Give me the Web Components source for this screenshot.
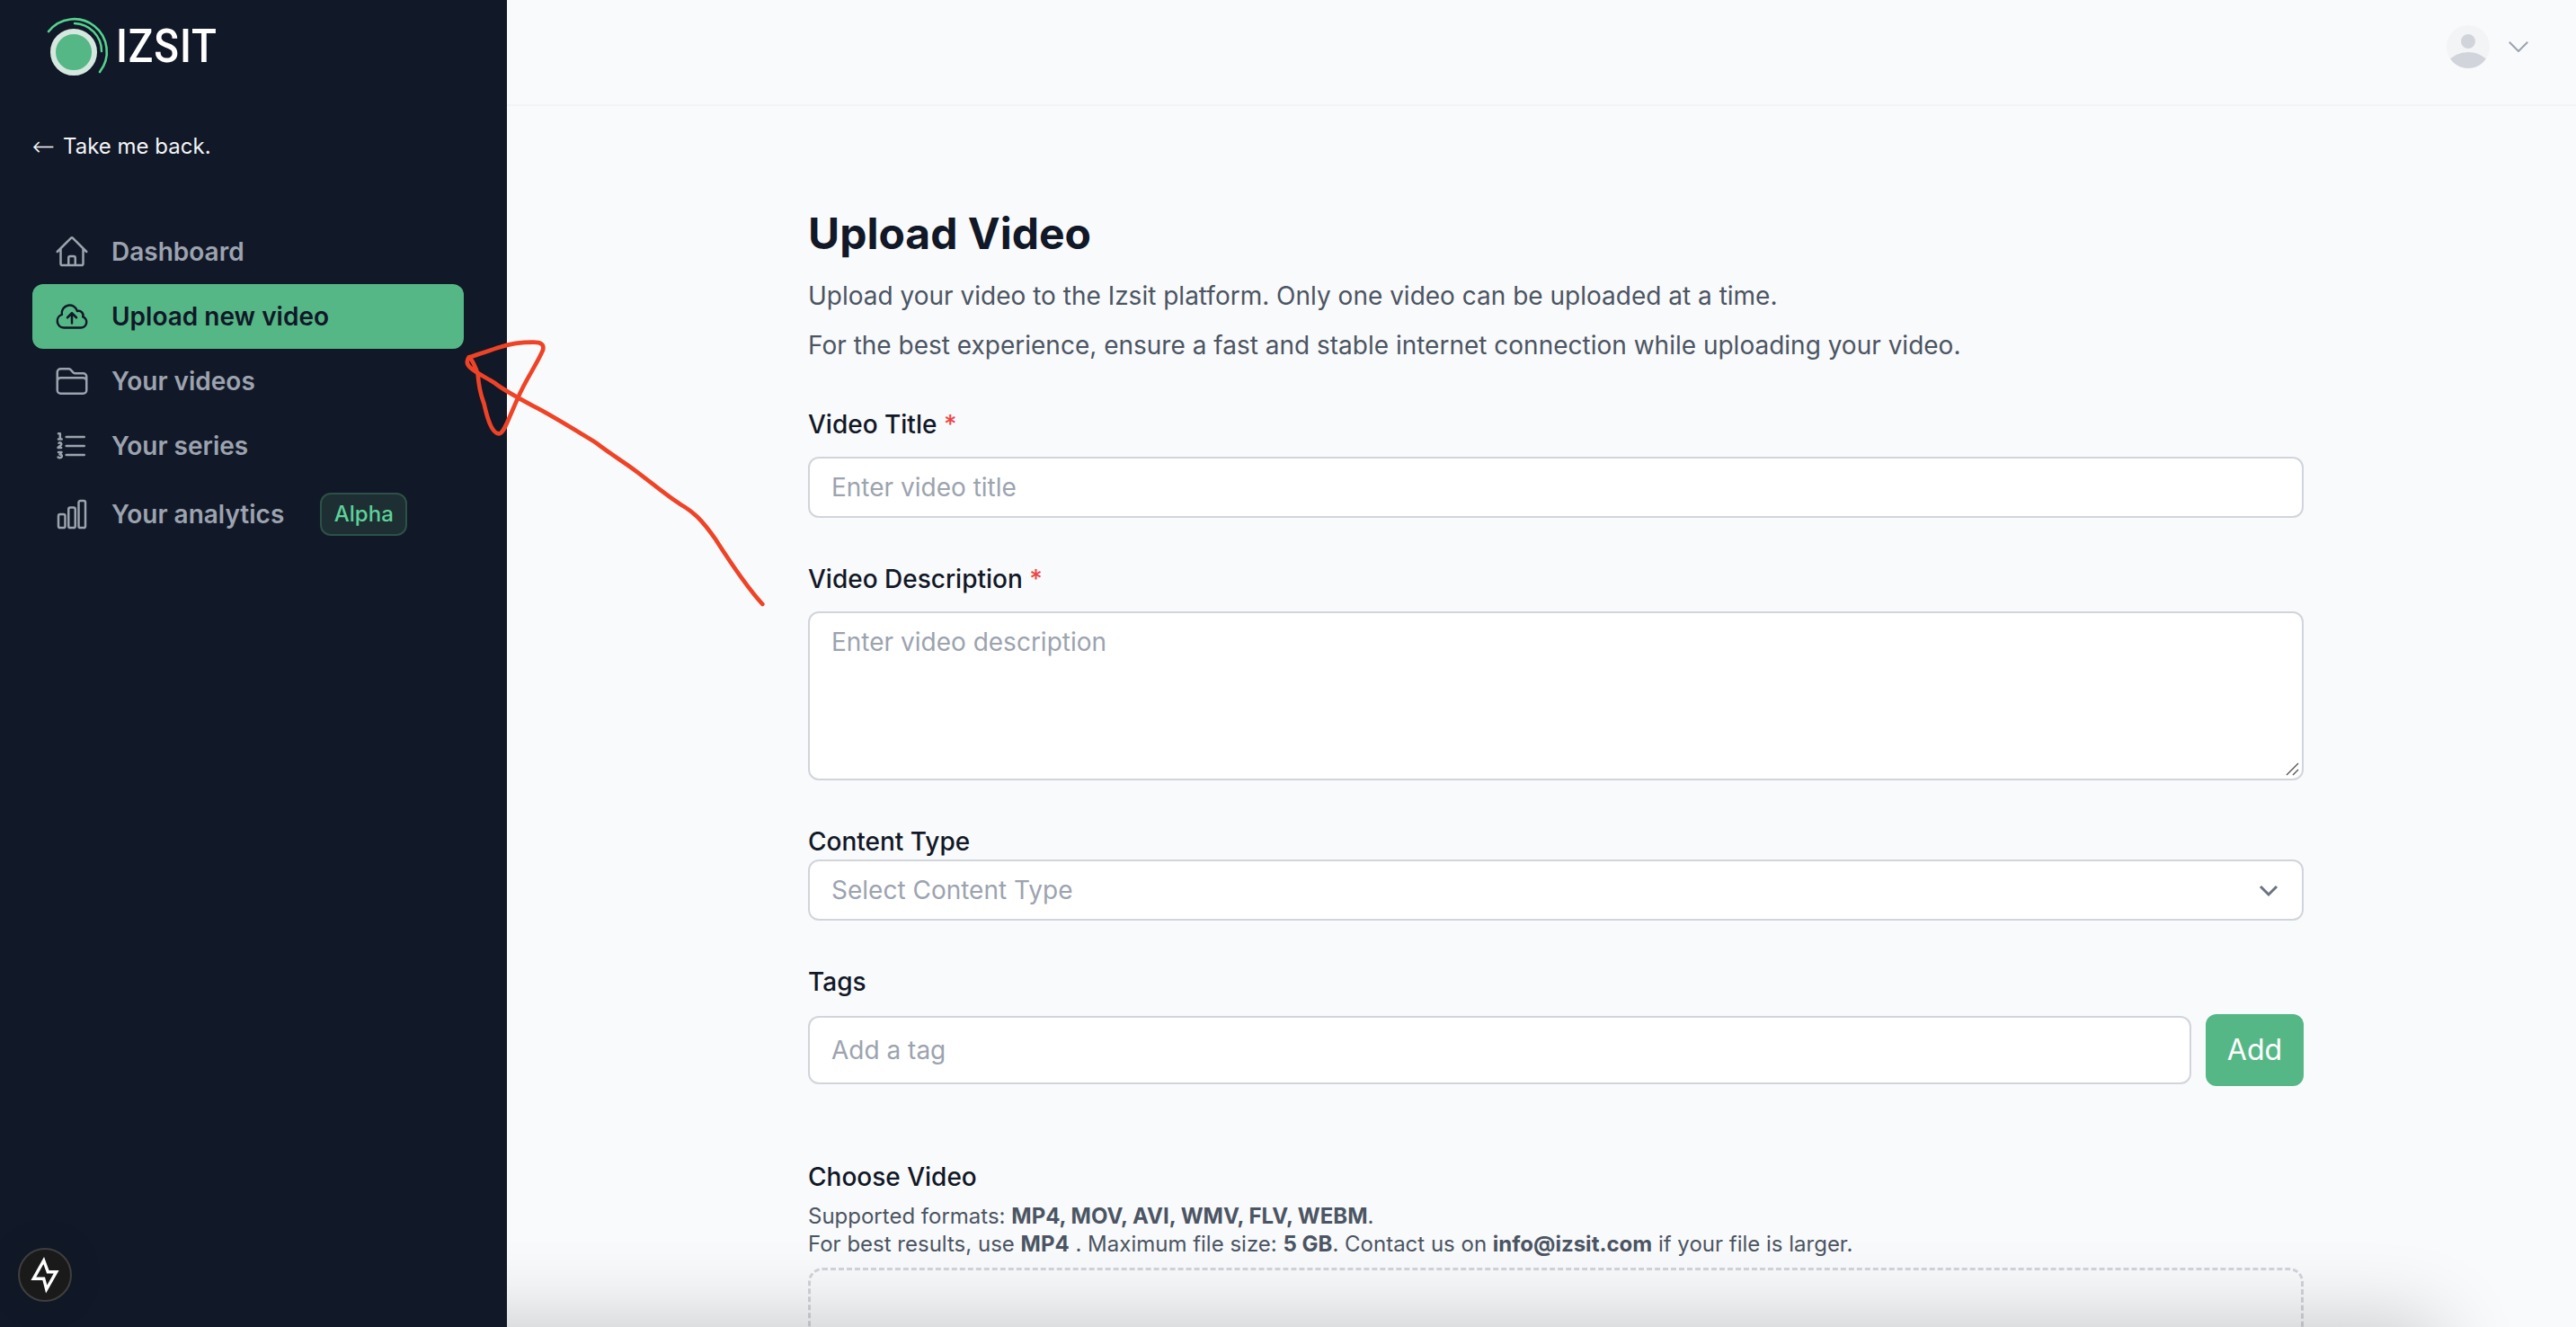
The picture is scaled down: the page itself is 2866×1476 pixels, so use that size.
<!DOCTYPE html>
<html lang="en">
<head>
<meta charset="utf-8">
<title>Upload Video</title>
<style>
html,body{margin:0;padding:0;height:1476px;overflow:hidden;background:#f9fafb;font-family:Inter,"Noto Sans",sans-serif}
</style>
</head>
<body>
<app-shell>
  <side-bar slot="side">
    <nav-item icon="home" label="Dashboard"></nav-item>
    <nav-item icon="cloud" label="Upload new video" active></nav-item>
    <nav-item icon="folder" label="Your videos"></nav-item>
    <nav-item icon="list" label="Your series"></nav-item>
    <nav-item icon="chart" label="Your analytics" badge="Alpha" tall></nav-item>
  </side-bar>
  <top-bar slot="top"></top-bar>
  <upload-form slot="main"></upload-form>
  <dev-button slot="over"></dev-button>
  <scribble-arrow slot="over"></scribble-arrow>
</app-shell>
<script>
const ICONS={
home:'<path d="m2.25 12 8.954-8.955c.44-.439 1.152-.439 1.591 0L21.75 12M4.5 9.75v10.125c0 .621.504 1.125 1.125 1.125H9.75v-4.875c0-.621.504-1.125 1.125-1.125h2.25c.621 0 1.125.504 1.125 1.125V21h4.125c.621 0 1.125-.504 1.125-1.125V9.75M8.25 21h8.25"/>',
cloud:'<path d="M12 16.5V9.75m0 0 3 3m-3-3-3 3M6.75 19.5a4.5 4.5 0 0 1-1.41-8.775 5.25 5.25 0 0 1 10.233-2.33 3 3 0 0 1 3.758 3.848A3.752 3.752 0 0 1 18 19.5H6.75Z"/>',
folder:'<path d="M2.25 12.75V12A2.25 2.25 0 0 1 4.5 9.75h15A2.25 2.25 0 0 1 21.75 12v.75m-8.69-6.44-2.12-2.12a1.5 1.5 0 0 0-1.061-.44H4.5A2.25 2.25 0 0 0 2.25 6v12a2.25 2.25 0 0 0 2.25 2.25h15A2.25 2.25 0 0 0 21.75 18V9a2.25 2.25 0 0 0-2.25-2.25h-5.379a1.5 1.5 0 0 1-1.06-.44Z"/>',
list:'<path d="M8.242 5.992h12m-12 6.003H20.24m-12 5.999h12M4.117 7.495v-3.75H2.99m1.125 3.75H2.99m1.125 0H5.24m-1.92 2.577a.976.976 0 1 1 1.339 1.42l-1.919 1.6v.125h2.137M3 16.2h2.1l-1.2 1.5c.9-.1 1.4.4 1.4 1 0 .7-.6 1.2-1.3 1.2-.5 0-.9-.1-1.2-.4"/>',
chart:'<path d="M3 13.125C3 12.504 3.504 12 4.125 12h2.25c.621 0 1.125.504 1.125 1.125v6.75C7.5 20.496 6.996 21 6.375 21h-2.25A1.125 1.125 0 0 1 3 19.875v-6.75ZM9.75 8.625c0-.621.504-1.125 1.125-1.125h2.25c.621 0 1.125.504 1.125 1.125v11.25c0 .621-.504 1.125-1.125 1.125h-2.25a1.125 1.125 0 0 1-1.125-1.125V8.625ZM16.5 4.125c0-.621.504-1.125 1.125-1.125h2.25C20.496 3 21 3.504 21 4.125v15.75c0 .621-.504 1.125-1.125 1.125h-2.25a1.125 1.125 0 0 1-1.125-1.125V4.125Z"/>'
};
function def(name,html,extra){
  const t=document.createElement('template');t.innerHTML=html;
  customElements.define(name,class extends HTMLElement{
    constructor(){super();this.attachShadow({mode:'open'}).appendChild(t.content.cloneNode(true));}
    connectedCallback(){extra&&extra.call(this,this.shadowRoot);}
  });
}
def('app-shell',`<style>
:host{display:grid;grid-template-columns:564px 1fr;grid-template-rows:118px 1fr;width:2866px;height:1476px;position:relative;overflow:hidden}
::slotted([slot=side]){grid-row:1/3}
</style><slot name="side"></slot><slot name="top"></slot><slot name="main"></slot><slot name="over"></slot>`);

def('brand-logo',`<style>
:host{display:flex;align-items:center;height:116px;box-sizing:border-box}
svg{display:block;flex:none;margin-left:12px}
span{font:500 52px/1 Roboto,sans-serif;color:#fff;letter-spacing:1px;display:inline-block;transform:scaleX(.88);transform-origin:0 50%;position:relative;top:-6px;margin-left:-3px}
</style>
<svg width="84" height="84" viewBox="48 16 84 84" fill="none">
<circle cx="82" cy="58" r="23" fill="#55b786" stroke="#d5e8df" stroke-width="6"/>
<path d="M54 35A36 36 0 0 1 111 80" stroke="#55d391" stroke-width="2.6" stroke-linecap="round"/>
<path d="M83 26A31 31 0 0 1 113 57" stroke="#55d391" stroke-width="2.4" stroke-linecap="round"/>
</svg><span>IZSIT</span>`);

def('side-bar',`<style>
:host{display:block;background:#111827;height:1476px;box-sizing:border-box;padding:0 48px 0 36px}
a{display:flex;align-items:center;font:400 24px/40px Inter,sans-serif;color:#f3f4f6;margin-top:27px;height:40px;white-space:nowrap}
a span{font:200 30px/40px "DejaVu Sans",sans-serif;width:34px;flex:none}
nav{display:flex;flex-direction:column;margin-top:61px}
</style>
<brand-logo></brand-logo>
<a><span>←</span>Take me back.</a>
<nav><slot></slot></nav>`);

customElements.define('nav-item',class extends HTMLElement{
  constructor(){super();this.attachShadow({mode:'open'});}
  connectedCallback(){
    const a=this.hasAttribute('active'),b=this.getAttribute('badge'),tall=this.hasAttribute('tall');
    this.shadowRoot.innerHTML=`<style>
:host{display:flex;align-items:center;height:${tall?80:72}px;border-radius:12px;padding-left:24px;gap:24px;box-sizing:border-box;
 background:${a?'#55b786':'transparent'};color:${a?'#111827':'#9ca3af'};font:600 28px/40px Inter,sans-serif;white-space:nowrap}
svg{width:40px;height:40px;flex:none;fill:none;stroke:currentColor;stroke-width:1.5;stroke-linecap:round;stroke-linejoin:round}
b{font:500 24px/44px Inter,sans-serif;color:#5ed29a;background:#1d2f32;border:2px solid #2c5248;border-radius:12px;width:97px;height:48px;box-sizing:border-box;text-align:center;margin-left:16px}
</style><svg viewBox="0 0 24 24">${ICONS[this.getAttribute('icon')]}</svg><span>${this.getAttribute('label')}</span>${b?`<b>${b}</b>`:''}`;
  }
});

def('top-bar',`<style>
:host{display:flex;align-items:center;justify-content:flex-end;height:118px;box-sizing:border-box;border-bottom:2px solid #f3f4f6;background:#f9fafb;padding:0 53px 12px 0;gap:21px}
.av{width:48px;height:48px;border-radius:50%;background:#f3f4f6;overflow:hidden;flex:none}
svg{display:block}
</style>
<div class="av"><svg width="48" height="48" viewBox="0 0 24 24" fill="#d1d5db"><path d="M24 20.993V24H0v-2.996A14.977 14.977 0 0112.004 15c4.904 0 9.26 2.354 11.996 5.993zM16.002 8.999a4 4 0 11-8 0 4 4 0 018 0z"/></svg></div>
<svg width="22" height="12" viewBox="0 0 22 12" fill="none" stroke="#9ca3af" stroke-width="2"><path d="M.8.8 11 11 21.2.8"/></svg>`);

def('form-label',`<style>
:host{display:block;font:500 28px/40px Inter,sans-serif;color:#111827}
i{font-style:normal;color:#ef4444}
</style><slot></slot>`,function(r){if(this.hasAttribute('req')){const i=document.createElement('i');i.textContent=' *';r.appendChild(i);}});

def('text-box',`<style>
:host{display:flex;align-items:center;box-sizing:border-box;height:68px;background:#fff;border:2px solid #d1d5db;border-radius:12px;padding:0 24px;font:400 28px/40px Inter,sans-serif;color:#9ca3af;position:relative}
:host([area]){align-items:flex-start;padding-top:12px;height:188px}
</style><slot></slot>`);

def('upload-form',`<style>
:host{display:block;box-sizing:border-box;height:1358px;padding:112px 303px 0 335px;overflow:hidden;position:relative;background:#f9fafb}
h1{margin:0;font:700 48px/60px Inter,sans-serif;color:#111827}
p{margin:0;font:400 28px/40px Inter,sans-serif;color:#4b5563;white-space:nowrap}
.p1{margin-top:19px}.p2{margin-top:15px}
.f{margin-top:48px}.g16{margin-top:16px}
.row{display:flex;align-items:center;gap:16px}
.row text-box{flex:1;height:76px}
button{width:109px;height:80px;border:0;border-radius:12px;background:#55b786;color:#fff;font:400 32px/40px Inter,sans-serif;padding:0}
.small{font:400 24px/31px Inter,sans-serif;color:#4b5563;white-space:nowrap}
.small b{font-weight:700}
.drop{box-sizing:border-box;height:300px;margin-top:11px;border:3px dashed #d1d5db;border-radius:16px}
.chev{position:absolute;right:26px;top:26px}
.grip{position:absolute;right:2px;bottom:2px}
.shade{position:absolute;left:-200px;width:2330px;top:1372px;height:100px;box-shadow:0 0 90px 20px rgba(0,0,0,.2);pointer-events:none}
</style>
<h1>Upload Video</h1>
<p class="p1">Upload your video to the Izsit platform. Only one video can be uploaded at a time.</p>
<p class="p2">For the best experience, ensure a fast and stable internet connection while uploading your video.</p>
<form-label class="f" req>Video Title</form-label>
<text-box class="g16">Enter video title</text-box>
<form-label class="f" req>Video Description</form-label>
<text-box class="g16" area>Enter video description
  <svg class="grip" width="16" height="16" viewBox="0 0 16 16" stroke="#555" stroke-width="1.4"><path d="M1 14 14 1M8 14l6-6"/></svg></text-box>
<form-label class="f">Content Type</form-label>
<text-box>Select Content Type
  <svg class="chev" width="22" height="14" viewBox="0 0 22 14" fill="none" stroke="#6b7280" stroke-width="3"><path d="M2 2l9 9 9-9"/></svg></text-box>
<form-label style="margin-top:48px">Tags</form-label>
<div class="row" style="margin-top:16px"><text-box>Add a tag</text-box><button>Add</button></div>
<form-label style="margin-top:81px">Choose Video</form-label>
<div class="small" style="margin-top:8px">Supported formats: <b>MP4, MOV, AVI, WMV, FLV, WEBM</b>.</div>
<div class="small">For best results, use <b>MP4</b> . Maximum file size: <b>5 GB</b>. Contact us on <b>info@izsit.com</b> if your file is larger.</div>
<div class="drop"></div>
<div class="shade"></div>`);

def('dev-button',`<style>
:host{display:block;position:absolute;left:20px;top:1388px;width:60px;height:60px;border-radius:50%;background:#1a1a1a;border:2px solid #3f3f3f;box-sizing:border-box;box-shadow:0 0 40px rgba(0,0,0,.12)}
svg{display:block;margin:-2px}
</style><svg width="60" height="60" viewBox="0 0 60 60" fill="none" stroke="#fff" stroke-width="3.4"><path d="M28.7 14 33.3 26.7H42.7L31.7 46 28.7 34.3H17.3Z"/></svg>`);

def('scribble-arrow',`<style>
:host{display:block;position:absolute;left:480px;top:360px;width:400px;height:340px;pointer-events:none}
svg{display:block}
</style><svg width="400" height="340" viewBox="0 0 1200 1020" fill="none" stroke="#ee4327" stroke-width="14" stroke-linecap="round" stroke-linejoin="round">
<path d="M1105 936C1050 875 1000 800 950 722C900 650 870 625 830 602C790 577 740 535 680 490C640 460 590 430 550 398C480 355 400 305 340 275C290 248 240 222 210 197C180 178 150 165 130 147C115 133 118 122 125 112C135 118 150 150 155 170C160 230 168 245 175 265C185 310 200 367 225 367C243 367 255 320 290 245C310 195 355 130 372 88C378 66 360 62 340 62C300 62 260 68 230 78C190 90 160 102 125 112"/>
</svg>`);
</script>
</body>
</html>
